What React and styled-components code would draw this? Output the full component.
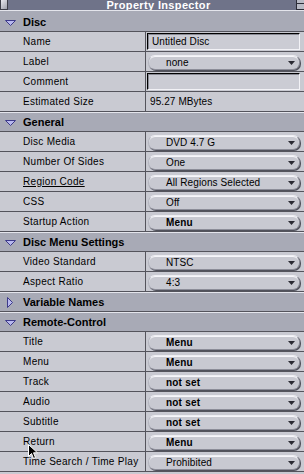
import React from 'react';
import styled, { createGlobalStyle } from 'styled-components';

const Global = createGlobalStyle`
  html, body { margin: 0; padding: 0; background: #c9cad2; }
  body { width: 304px; height: 474px; overflow: hidden; }
`;

const Window = styled.div`
  position: relative;
  width: 304px;
  height: 474px;
  overflow: hidden;
  background: #c9cad2;
  font-family: "Liberation Sans", Arial, sans-serif;
  font-size: 10px;
  letter-spacing: 0.1px;
  color: #000;
`;

const TitleBar = styled.div`
  height: 10px;
  background: #6f7389;
  display: flex;
  align-items: stretch;
  overflow: hidden;
`;

const CloseBox = styled.div`
  width: 8px;
  margin: 0 1px 0 0;
  box-sizing: border-box;
  border: 1px solid #3c3d48;
  border-top: none;
  background: linear-gradient(135deg, #e8e8ee, #9d9fab);
`;

const TitleText = styled.div`
  flex: 1;
  text-align: center;
  padding-left: 12px;
  color: #fff;
  font-family: "Liberation Sans", Arial, sans-serif;
  font-weight: bold;
  font-size: 11px;
  line-height: 10px;
  letter-spacing: 0.35px;
`;

const ShadeBox = styled.div`
  width: 8px;
  box-sizing: border-box;
  border: 1px solid #2c2d38;
  border-top: none;
  border-right: none;
  background: #b9bbc6;
  display: flex;
  align-items: center;
`;

const ShadeLine = styled.div`
  height: 1px;
  width: 100%;
  background: #2c2d38;
  margin-top: -2px;
`;

const Header = styled.div`
  height: ${p => (p.$first ? '22px' : '20px')};
  box-sizing: border-box;
  background: #a8aab6;
  border-top: 1px solid #e4e5ec;
  border-bottom: 1px solid #54545c;
  display: flex;
  align-items: center;
  padding-top: ${p => (p.$first ? '2px' : '0')};
  font-weight: bold;
  font-size: 11px;
  letter-spacing: 0;
`;

const Disclosure = styled.svg`
  width: 18px;
  margin-left: 5px;
  flex: none;
`;

const Row = styled.div`
  display: flex;
  height: 20px;
  box-sizing: border-box;
  border-bottom: 1px solid #54545c;
`;

const LabelCell = styled.div`
  width: 146px;
  flex: none;
  box-sizing: border-box;
  border-right: 1px solid #54545c;
  padding-left: 23px;
  display: flex;
  align-items: center;
  white-space: nowrap;
  letter-spacing: 0.3px;
  text-decoration: ${p => (p.$underline ? 'underline' : 'none')};
`;

const ValueCell = styled.div`
  flex: 1;
  display: flex;
  align-items: flex-start;
  padding: 0 4px 0 2px;
  min-width: 0;
`;

const PlainValue = styled.div`
  height: 19px;
  display: flex;
  align-items: center;
  padding-left: 2px;
`;

const TextField = styled.div`
  flex: 1;
  height: 17px;
  margin-top: 1px;
  margin-left: -1px;
  box-sizing: border-box;
  border: 1px solid #000;
  border-right-color: #f2f2f6;
  border-bottom-color: #f2f2f6;
  background: #cbccd4;
  box-shadow: inset 1px 1px 0 #8a8b95;
  display: flex;
  align-items: center;
  padding-left: 4px;
`;

const Popup = styled.div`
  position: relative;
  flex: 1;
  height: 15px;
  margin-top: 3px;
  box-sizing: border-box;
  border-radius: 7px;
  background: #c8c9d1;
  border: 1px solid #8c8d98;
  border-top-color: #eeeef3;
  border-left-color: #b5b6c0;
  box-shadow: inset 0 1px 0 #f6f6fa, 1px 1px 0 #50515b;
  display: flex;
  align-items: center;
  padding-left: 17px;
  font-weight: ${p => (p.$bold ? 'bold' : 'normal')};
  letter-spacing: ${p => (p.$bold ? '0.2px' : '0.1px')};
  white-space: nowrap;
`;

const Arrow = styled.svg`
  position: absolute;
  right: 4px;
  top: 5px;
`;

const Cursor = styled.svg`
  position: absolute;
  left: 28px;
  top: 444px;
`;

const Tri = ({ open }) => (
  <Disclosure height="11" viewBox="0 0 18 11">
    {open ? (
      <polygon points="0.5,3.5 10.5,3.5 5.5,8.5" fill="#b8b8ee" stroke="#3d3a8a" strokeWidth="1" />
    ) : (
      <polygon points="2.5,0.5 7.5,5.5 2.5,10.5" fill="#b8b8ee" stroke="#3d3a8a" strokeWidth="1" />
    )}
  </Disclosure>
);

const PopupField = ({ value, bold }) => (
  <Popup $bold={bold}>
    {value}
    <Arrow width="7" height="4" viewBox="0 0 7 4">
      <polygon points="0,0 7,0 3.5,4" fill="#2a2a33" />
    </Arrow>
  </Popup>
);

const sections = [
  {
    title: 'Disc', open: true, rows: [
      { label: 'Name', kind: 'text', value: 'Untitled Disc' },
      { label: 'Label', kind: 'popup', value: 'none' },
      { label: 'Comment', kind: 'text', value: '' },
      { label: 'Estimated Size', kind: 'plain', value: '95.27 MBytes' },
    ],
  },
  {
    title: 'General', open: true, rows: [
      { label: 'Disc Media', kind: 'popup', value: 'DVD 4.7 G' },
      { label: 'Number Of Sides', kind: 'popup', value: 'One' },
      { label: 'Region Code', kind: 'popup', value: 'All Regions Selected', underline: true },
      { label: 'CSS', kind: 'popup', value: 'Off' },
      { label: 'Startup Action', kind: 'popup', value: 'Menu', bold: true },
    ],
  },
  {
    title: 'Disc Menu Settings', open: true, rows: [
      { label: 'Video Standard', kind: 'popup', value: 'NTSC' },
      { label: 'Aspect Ratio', kind: 'popup', value: '4:3' },
    ],
  },
  { title: 'Variable Names', open: false, rows: [] },
  {
    title: 'Remote-Control', open: true, rows: [
      { label: 'Title', kind: 'popup', value: 'Menu', bold: true },
      { label: 'Menu', kind: 'popup', value: 'Menu', bold: true },
      { label: 'Track', kind: 'popup', value: 'not set', bold: true },
      { label: 'Audio', kind: 'popup', value: 'not set', bold: true },
      { label: 'Subtitle', kind: 'popup', value: 'not set', bold: true },
      { label: 'Return', kind: 'popup', value: 'Menu', bold: true },
      { label: 'Time Search / Time Play', kind: 'popup', value: 'Prohibited' },
    ],
  },
];

const renderValue = r => {
  if (r.kind === 'text') return <TextField>{r.value}</TextField>;
  if (r.kind === 'plain') return <PlainValue>{r.value}</PlainValue>;
  return <PopupField value={r.value} bold={r.bold} />;
};

export default function App() {
  return (
    <Window>
      <Global />
      <TitleBar>
        <CloseBox />
        <TitleText>Property Inspector</TitleText>
        <ShadeBox><ShadeLine /></ShadeBox>
      </TitleBar>
      {sections.map((s, i) => (
        <React.Fragment key={s.title}>
          <Header $first={i === 0}>
            <Tri open={s.open} />
            {s.title}
          </Header>
          {s.rows.map(r => (
            <Row key={r.label}>
              <LabelCell $underline={r.underline}>{r.label}</LabelCell>
              <ValueCell>{renderValue(r)}</ValueCell>
            </Row>
          ))}
        </React.Fragment>
      ))}
      <Cursor width="12" height="17" viewBox="0 0 12 17">
        <path d="M0.5 0.5 L0.5 12.5 L3.5 9.5 L5.5 14.5 L7.5 13.5 L5.5 8.8 L9.5 8.8 Z" fill="#000" stroke="#fff" strokeWidth="1" />
      </Cursor>
    </Window>
  );
}
